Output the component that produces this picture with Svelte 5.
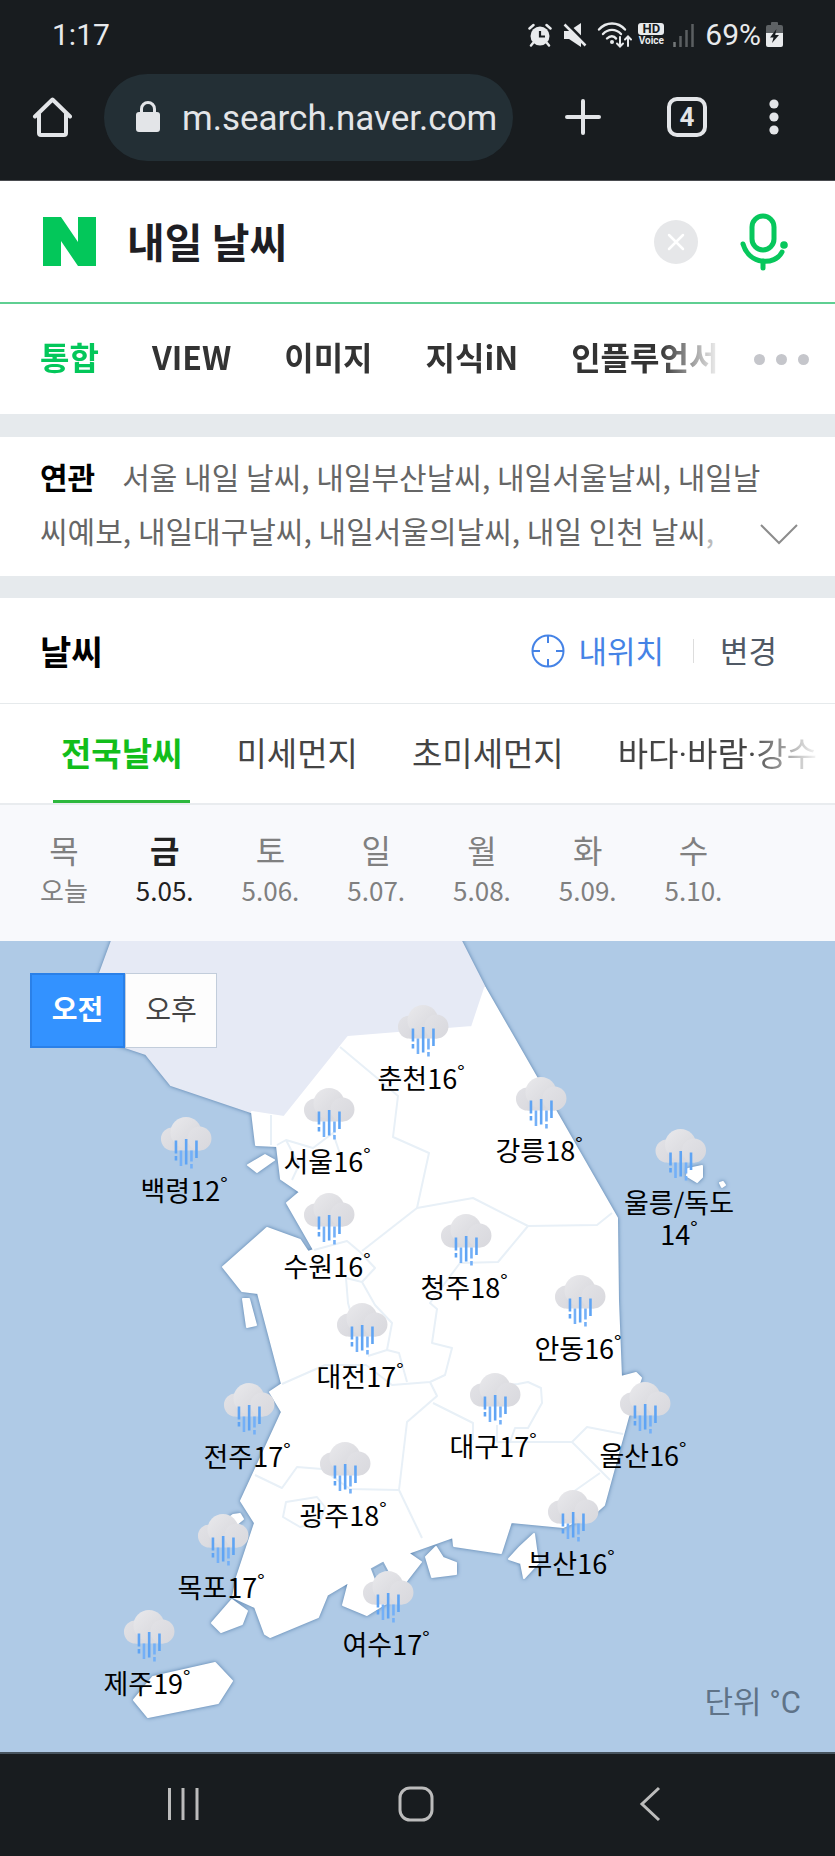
<script lang="ts">
  interface City {
    name: string;
    temp: number;
    x: number;
    y: number;
    wrap?: boolean;
  }

  // Map canvas size, city coordinates are relative to it
  const mapWidth = 835;
  const mapHeight = 811;

  const cities: City[] = [
    { name: "춘천", temp: 16, x: 423, y: 64 },
    { name: "강릉", temp: 18, x: 541, y: 136 },
    { name: "백령", temp: 12, x: 186, y: 176 },
    { name: "서울", temp: 16, x: 329, y: 147 },
    { name: "수원", temp: 16, x: 329, y: 252 },
    { name: "울릉/독도", temp: 14, x: 681, y: 188, wrap: true },
    { name: "청주", temp: 18, x: 466, y: 273 },
    { name: "안동", temp: 16, x: 580, y: 334 },
    { name: "대전", temp: 17, x: 362, y: 362 },
    { name: "전주", temp: 17, x: 249, y: 442 },
    { name: "대구", temp: 17, x: 495, y: 432 },
    { name: "울산", temp: 16, x: 645, y: 441 },
    { name: "광주", temp: 18, x: 345, y: 501 },
    { name: "부산", temp: 16, x: 573, y: 549 },
    { name: "목포", temp: 17, x: 223, y: 573 },
    { name: "여수", temp: 17, x: 388, y: 630 },
    { name: "제주", temp: 19, x: 149, y: 669 },
  ];

  const searchTabs = ["통합", "VIEW", "이미지", "지식iN", "인플루언서"];
  const weatherTabs = ["전국날씨", "미세먼지", "초미세먼지", "바다·바람·강수"];

  const days = [
    { day: "목", date: "오늘" },
    { day: "금", date: "5.05." },
    { day: "토", date: "5.06." },
    { day: "일", date: "5.07." },
    { day: "월", date: "5.08." },
    { day: "화", date: "5.09." },
    { day: "수", date: "5.10." },
  ];

  let query = $state("내일 날씨");
  let searchTab = $state(0);
  let weatherTab = $state(0);
  let selectedDay = $state(1);
  let period = $state("am");
</script>

<div class="screen">
  <div class="status-bar">
    <span class="time">1:17</span>
    <div class="status-icons">
      <svg width="24" height="24" viewBox="0 0 24 24">
        <circle cx="12" cy="13" r="9.5" fill="#e8eaec" />
        <path d="M1.500 5.500 5.500 2M22.500 5.500 18.500 2M5 20l-2 2.500M19 20l2 2.500" stroke="#e8eaec" stroke-width="2.500" stroke-linecap="round" />
        <path d="M12 8v5.500h5" stroke="#181c1f" stroke-width="2.200" fill="none" />
      </svg>
      <svg class="mute" width="24" height="24" viewBox="0 0 24 24">
        <path d="M1 8h5l12-8v24L6 16H1z" fill="#e8eaec" />
        <path d="M3.500 0 23.500 20" stroke="#181c1f" stroke-width="3" />
        <path d="M1.500 1.500 22.500 22.500" stroke="#e8eaec" stroke-width="2.500" />
      </svg>
      <svg class="wifi" width="36" height="28" viewBox="0 0 36 28">
        <g fill="none" stroke="#e8eaec" stroke-width="2.400" stroke-linecap="round">
          <path d="M2 8.500C9 .500 21 .500 28 8.500" />
          <path d="M6 13C11 7.500 19 7.500 24 13" />
          <path d="M10 17.500c3-3 7-3 9 0" />
          <path d="M23 16v9M20 22.500l3 3 3-3M31 25v-9M28 18.500l3-3 3 3" stroke-width="2" />
        </g>
        <circle cx="15" cy="21" r="2" fill="#e8eaec" />
      </svg>
      <span class="hd"><b>HD</b><i>Voice</i></span>
      <svg class="signal" width="22" height="24" viewBox="0 0 22 24">
        <path d="M1.500 24v-5" stroke="#74787a" stroke-width="2.500" />
        <path d="M7.500 24V13M13.500 24V7M19.500 24V1" stroke="#5b5f62" stroke-width="2.500" />
      </svg>
      <span class="battery-text">69%</span>
      <svg class="battery" width="17" height="25" viewBox="0 0 17 25">
        <path d="M5 1q0-1 1-1h5q1 0 1 1v2h3q2 0 2 2v7H0V5q0-2 2-2h3z" fill="#5d6164" />
        <path d="M0 11h17v12q0 2-2 2H2q-2 0-2-2z" fill="#e8eaec" />
        <path d="M10.500 7 4 15.500h3.500L6 21l7-8H9.200z" fill="#181c1f" />
      </svg>
    </div>
  </div>

  <div class="toolbar">
    <button class="icon-button" aria-label="Home">
      <svg width="40" height="40" viewBox="0 0 40 40" fill="none" stroke="#e3e5e8" stroke-width="4" stroke-linejoin="round" stroke-linecap="round">
        <path d="M3 19.500 20.500 2.500 38 19.500" />
        <path d="M7 17v19q0 2 2 2h23q2 0 2-2V17" />
      </svg>
    </button>
    <div class="address">
      <svg width="24" height="32" viewBox="0 0 24 32">
        <rect x="0" y="11" width="24" height="20" rx="3" fill="#e3e5e8" />
        <path d="M5.500 12V8a6.500 6.500 0 0 1 13 0v4" fill="none" stroke="#e3e5e8" stroke-width="3" />
      </svg>
      <span>m.search.naver.com</span>
    </div>
    <button class="icon-button new-tab" aria-label="New tab">
      <svg width="36" height="36" viewBox="0 0 36 36">
        <path d="M18 2v32M2 18h32" stroke="#e3e5e8" stroke-width="4" stroke-linecap="round" />
      </svg>
    </button>
    <button class="tab-count">4</button>
    <button class="icon-button menu" aria-label="Menu">
      <svg width="10" height="36" viewBox="0 0 10 36" fill="#e3e5e8">
        <circle cx="5" cy="5" r="4.600" />
        <circle cx="5" cy="18" r="4.600" />
        <circle cx="5" cy="31" r="4.600" />
      </svg>
    </button>
  </div>

  <form class="search" onsubmit={(e) => e.preventDefault()}>
    <a href="#naver" aria-label="NAVER" class="logo">
      <svg width="53" height="49" viewBox="0 0 53 49">
        <path d="M0 0h18l17 25V0h18v49H35L18 24v25H0z" fill="#03c75a" />
      </svg>
    </a>
    <input type="text" aria-label="검색어" bind:value={query} />
    <button type="button" class="clear" aria-label="지우기" onclick={() => (query = "")}>
      <svg width="44" height="44" viewBox="0 0 44 44">
        <circle cx="22" cy="22" r="22" fill="#e6e7e9" />
        <path d="M15 15l14 14M29 15 15 29" stroke="#fff" stroke-width="2.500" stroke-linecap="round" />
      </svg>
    </button>
    <button type="button" class="mic" aria-label="음성검색">
      <svg width="48" height="58" viewBox="0 0 48 58" fill="none" stroke="#07c75c" stroke-width="5" stroke-linecap="round">
        <rect x="12" y="3" width="22" height="34" rx="11" />
        <path d="M3 31C9 52 35 53 42 39" />
        <path d="M23 48v7" />
        <circle cx="44" cy="32" r="3.800" fill="#07c75c" stroke="none" />
      </svg>
    </button>
  </form>

  <nav class="search-nav">
    <div class="search-tabs">
      {#each searchTabs as tab, i}
        <a href="#tab-{i}" class:active={searchTab === i} onclick={() => (searchTab = i)}>{tab}</a>
      {/each}
    </div>
    <button class="more" aria-label="더보기"><span></span><span></span><span></span></button>
  </nav>

  <section class="related">
    <p>
      <strong>연관</strong><a href="#r1">서울 내일 날씨</a>, <a href="#r2">내일부산날씨</a>, <a href="#r3">내일서울날씨</a>, <a href="#r4">내일날<br />씨예보</a>, <a href="#r5">내일대구날씨</a>, <a href="#r6">내일서울의날씨</a>, <a href="#r7">내일 인천 날씨</a><span class="faded">,</span>
    </p>
    <button class="expand" aria-label="펼치기">
      <svg width="38" height="22" viewBox="0 0 38 22">
        <path d="M1 2l18 18L37 2" fill="none" stroke="#8c8c8c" stroke-width="2" />
      </svg>
    </button>
  </section>

  <section class="weather">
    <header class="weather-header">
      <h2>날씨</h2>
      <button class="location">
        <svg width="34" height="34" viewBox="0 0 34 34" fill="none" stroke="#4583e6" stroke-width="2">
          <circle cx="17" cy="17" r="15.500" />
          <path d="M17 2v7M17 25v7M2 17h7M25 17h7" />
        </svg>
        <span>내위치</span>
      </button>
      <button class="change"><span>변경</span></button>
    </header>

    <nav class="weather-tabs">
      {#each weatherTabs as tab, i}
        <a href="#weather-{i}" class:active={weatherTab === i} onclick={() => (weatherTab = i)}>{tab}</a>
      {/each}
    </nav>

    <div class="days">
      {#each days as item, i}
        <button class:active={selectedDay === i} onclick={() => (selectedDay = i)}>
          <span class="day">{item.day}</span>
          <span class="date">{item.date}</span>
        </button>
      {/each}
    </div>

    <div class="map">
      <svg class="land" viewBox="0 941 835 811" aria-hidden="true">
        <defs>
          <linearGradient id="cloud" x1="0" y1="0" x2="1" y2="1">
            <stop offset="0" stop-color="#e9e9ec" />
            <stop offset="1" stop-color="#d5d5da" />
          </linearGradient>
          <linearGradient id="cloud-side" x1="0" y1="0" x2="1" y2="1">
            <stop offset="0" stop-color="#e2e2e6" />
            <stop offset="1" stop-color="#d8d8dd" />
          </linearGradient>
        </defs>
        <g class="coast">
          <path class="north" d="M114 935 100 973 104 1040 125 1047 146 1054 171 1085 251 1112 284 1117 350 1037 472 1027 485 988 458 935z" />
          <g class="south">
            <path d="M485 988 617 1218 618 1300 621 1377 636 1373 641 1378 628 1417 604 1505 595 1513 563 1527 511 1522 501 1553 454 1546 453 1537 408 1553 421 1562 407 1580 388 1602 367 1615 343 1605 349 1582 327 1595 318 1617 270 1637 265 1634 255 1607 233 1597 237 1577 255 1523 241 1501 282 1412 270 1392 282 1384 258 1293 242 1291 223 1267 267 1228 300 1240 308 1252 314 1250 287 1203 300 1192 281 1179 277 1146 256 1145 252 1112 284 1117 348 1037 472 1027z" />
            <path d="M248 1165 265 1155 274 1160 257 1172z" />
            <path d="M243 1299 249 1299 256 1325 247 1327z" />
            <path d="M229 1518 233 1515 240 1514 243 1519 237 1524z" />
            <path d="M232 1600 247 1611 242 1624 221 1632 212 1623z" />
            <path d="M153 1677 215 1663 232 1681 218 1703 148 1717 134 1700z" />
            <path d="M436 1547 443 1558 456 1563 456 1574 432 1577 426 1557z" />
            <path d="M534 1534 538 1563 524 1578 521 1563 509 1559 520 1547z" />
            <path d="M688 1169 702 1166 702 1177 697 1182 687 1176z" />
            <path d="M720 1183 723 1182 725 1185 722 1187z" />
          </g>
        </g>
        <path class="inlet" d="M383 1563 372 1569 377 1582 392 1580z" />
        <g class="border">
          <path d="M340 1047 383 1083 398 1096 393 1137 429 1153 417 1208 473 1198 528 1226 597 1225 612 1213" />
          <path d="M528 1226 498 1262 460 1263 430 1303 437 1309 432 1343 452 1348 445 1375 430 1382 392 1385 366 1365 325 1365 282 1384" />
          <path d="M417 1208 362 1251 M314 1250 347 1241 360 1252 375 1268 362 1282 346 1278 348 1303 358 1340 M362 1282 375 1305 392 1323 387 1350 368 1356 M387 1350 399 1353 407 1382" />
          <path d="M430 1382 437 1396 407 1422 399 1490 422 1538 M433 1403 473 1423 473 1440 M399 1490 350 1489 322 1469 297 1467 282 1488 255 1475" />
          <path d="M286 1502 317 1497 325 1507 320 1522 300 1527 283 1517z" />
          <path d="M500 1385 518 1384 528 1382 541 1388 542 1403 528 1428 515 1428 510 1442 M497 1425v17h75l15-15 36 7 M572 1442 610 1480 M600 1473 573 1492" />
          <path d="M271 1115v30 M277 1145 286 1140 313 1148 333 1133 342 1160 M286 1140 299 1165 292 1180" />
        </g>
      </svg>

      <div class="period">
        <button class:active={period === "am"} onclick={() => (period = "am")}>오전</button>
        <button class:active={period === "pm"} onclick={() => (period = "pm")}>오후</button>
      </div>

      {#each cities as city (city.name)}
        <a
          href="#{city.name}"
          class="city"
          style="left: {(city.x / mapWidth) * 100}%; top: {(city.y / mapHeight) * 100}%"
        >
          <svg width="52" height="52" viewBox="0 0 52 52">
            <circle cx="12" cy="22" r="11.500" fill="url(#cloud-side)" />
            <path d="M12 18h28v15.500H12z" fill="#dadadf" />
            <circle cx="25.500" cy="15.500" r="15.500" fill="url(#cloud)" />
            <circle cx="39" cy="21.500" r="12" fill="url(#cloud-side)" />
            <g stroke="#5fa4f4" stroke-width="2.600">
              <path d="M15.500 23.500v13M15.500 39v4.500M25.700 22v25.500M36 23.500v17.500" />
              <path d="M20.500 33.500v15.500M31 33.500v11M31 47v4.500" stroke="#74b0f7" />
            </g>
          </svg>
          <span class="label">
            {city.name}{#if city.wrap}<br />{/if}{city.temp}<sup>°</sup>
          </span>
        </a>
      {/each}

      <span class="unit">단위 °C</span>
    </div>
  </section>

  <div class="nav-bar">
    <button aria-label="Recents">
      <svg width="34" height="36" viewBox="0 0 34 36">
        <path d="M3.500 2v32M17 2v32M31 2v32" stroke="#bcbcbc" stroke-width="3" />
      </svg>
    </button>
    <button aria-label="Home screen">
      <svg width="36" height="36" viewBox="0 0 36 36">
        <rect x="2" y="2" width="32" height="32" rx="10" fill="none" stroke="#bcbcbc" stroke-width="3" />
      </svg>
    </button>
    <button aria-label="Back">
      <svg width="22" height="36" viewBox="0 0 22 36">
        <path d="M20 2 3 18l17 16" fill="none" stroke="#bcbcbc" stroke-width="3" />
      </svg>
    </button>
  </div>
</div>

<style>
  :global(body) {
    margin: 0;
    background: #e6eaed;
  }

  .screen {
    font-family: "Noto Sans CJK KR", "Noto Sans", sans-serif;
    color: #333;
    overflow: hidden;
  }

  .screen * {
    box-sizing: border-box;
  }

  button {
    padding: 0;
    border: none;
    background: none;
    font: inherit;
    color: inherit;
    cursor: pointer;
  }

  a {
    color: inherit;
    text-decoration: none;
  }

  svg {
    display: block;
    flex: none;
  }

  .status-bar {
    display: flex;
    justify-content: space-between;
    align-items: center;
    height: 72px;
    padding: 0 52px 3px;
    background: #181c1f;
    color: #e8eaec;
    font-family: Roboto, sans-serif;
    font-size: 30px;
  }

  .status-icons {
    display: flex;
    align-items: center;
  }

  .mute {
    margin-left: 11px;
  }

  .wifi {
    margin-left: 10px;
  }

  .hd {
    display: flex;
    flex-direction: column;
    align-items: center;
    width: 26px;
    margin-left: 5px;
    line-height: 12px;
  }

  .hd b {
    width: 26px;
    border-radius: 3px;
    background: #e8eaec;
    color: #181c1f;
    font-size: 13px;
    text-align: center;
  }

  .hd i {
    font-size: 10px;
    font-style: normal;
    font-weight: 700;
  }

  .signal {
    margin-left: 9px;
  }

  .battery-text {
    margin-left: 10px;
  }

  .battery {
    margin-left: 5px;
  }

  .toolbar {
    display: flex;
    align-items: center;
    height: 109px;
    padding: 2px 56px 20px 32px;
    border-bottom: 1px solid #4a4c50;
    background: #181c1f;
    color: #e3e5e8;
    font-family: Roboto, sans-serif;
  }

  .address {
    display: flex;
    flex: 1;
    align-items: center;
    gap: 22px;
    height: 87px;
    margin-left: 32px;
    padding-left: 32px;
    border-radius: 44px;
    background: #232f35;
    font-size: 35px;
    white-space: nowrap;
  }

  .address span {
    padding-top: 3px;
  }

  .new-tab {
    margin-left: 52px;
  }

  .tab-count {
    width: 40px;
    height: 40px;
    margin-left: 66px;
    border: 4px solid #e3e5e8;
    border-radius: 10px;
    font-size: 26px;
    font-weight: 700;
    line-height: 32px;
  }

  .menu {
    margin-left: 62px;
  }

  .search {
    display: flex;
    align-items: center;
    height: 123px;
    padding: 0 47px 0 43px;
    border-bottom: 2px solid #5fcf92;
    background: #fff;
  }

  .search input {
    flex: 1;
    min-width: 0;
    padding: 0 0 4px;
    margin-left: 31px;
    border: none;
    outline: none;
    background: none;
    color: #1e1e23;
    font-family: inherit;
    font-size: 41px;
    font-weight: 700;
    line-height: 56px;
  }

  .mic {
    margin-left: 42px;
  }

  .search-nav {
    display: flex;
    align-items: center;
    justify-content: space-between;
    height: 110px;
    padding: 0 26px 0 40px;
    background: #fff;
  }

  .search-tabs {
    display: flex;
    flex: 1;
    gap: 53px;
    margin-right: 32px;
    padding-bottom: 6px;
    overflow: hidden;
    white-space: nowrap;
    font-size: 32px;
    font-weight: 700;
    line-height: 48px;
    mask-image: linear-gradient(to right, #000 620px, transparent 100%);
  }

  .search-tabs .active {
    color: #03c75a;
  }

  .more {
    display: flex;
    gap: 11px;
  }

  .more span {
    width: 11px;
    height: 11px;
    border-radius: 50%;
    background: #c5c6cb;
  }

  .related {
    display: flex;
    align-items: flex-end;
    justify-content: space-between;
    margin: 23px 0 22px;
    padding: 12px 40px 19px;
    background: #fff;
    color: #666;
    font-size: 30px;
    line-height: 54px;
    white-space: nowrap;
  }

  .related p {
    margin: 0;
  }

  .related strong {
    margin-right: 27px;
    color: #000;
  }

  .faded {
    color: #bbb;
  }

  .expand {
    padding-bottom: 12px;
  }

  .weather {
    background: #fff;
  }

  .weather-header {
    display: flex;
    align-items: center;
    height: 106px;
    padding: 0 58px 0 40px;
    border-bottom: 1px solid #e6eaec;
    font-size: 31px;
  }

  .weather-header h2 {
    flex: 1;
    margin: 0;
    color: #000;
    font-size: 34px;
    font-weight: 700;
  }

  .weather-header span {
    display: block;
    padding-bottom: 3px;
  }

  .location {
    display: flex;
    align-items: center;
    gap: 13px;
    color: #4583e6;
  }

  .change {
    margin-left: 29px;
    padding-left: 26px;
    border-left: 1px solid #ddd;
    color: #505965;
    line-height: 21px;
  }

  .weather-tabs {
    display: flex;
    gap: 38px;
    height: 101px;
    padding: 0 20px 0 53px;
    overflow: hidden;
    border-bottom: 2px solid #e9ecef;
    color: #444;
    font-family: Roboto, "Noto Sans CJK KR", sans-serif;
    font-size: 33px;
    line-height: 102px;
    white-space: nowrap;
  }

  .weather-tabs a {
    padding: 0 8px;
  }

  .weather-tabs a:last-child {
    mask-image: linear-gradient(to right, #000 140px, transparent 210px);
  }

  .weather-tabs .active {
    border-bottom: 3px solid #2db83d;
    color: #12be1b;
    font-weight: 700;
  }

  .days {
    display: flex;
    gap: 48px;
    height: 136px;
    padding: 23px 40px;
    background: #f8f9fc;
    color: #808080;
  }

  .days button {
    display: flex;
    flex-direction: column;
    align-items: center;
  }

  .day {
    font-size: 32px;
    line-height: 42px;
  }

  .date {
    font-size: 26px;
    line-height: 40px;
  }

  .days .active {
    color: #222;
  }

  .active .day {
    font-weight: 700;
  }

  .map {
    position: relative;
    background: #afcae6;
  }

  .land {
    width: 100%;
    height: auto;
  }

  .coast {
    filter: drop-shadow(0 0 2px #4f7aa8);
  }

  .north,
  .south path {
    stroke-width: 2;
    stroke-linejoin: round;
  }

  .north {
    fill: #e6eaf5;
    stroke: #e6eaf5;
  }

  .south path {
    fill: #fff;
    stroke: #fff;
  }

  .inlet {
    fill: #a6c2df;
    stroke: #8fafd0;
    stroke-width: 2;
  }

  .border path {
    fill: none;
    stroke: #e8f0f7;
    stroke-width: 2;
    stroke-linejoin: round;
  }

  .period {
    position: absolute;
    top: 32px;
    left: 30px;
    display: flex;
    font-size: 28px;
  }

  .period button {
    width: 92px;
    height: 75px;
    padding-bottom: 5px;
    border: 1px solid #c2cddb;
    background: #fdfdfd;
    color: #444;
  }

  .period .active {
    width: 95px;
    border: 2px solid #2a80e8;
    background: #3392ff;
    color: #fff;
    font-weight: 700;
  }

  .city {
    position: absolute;
    display: flex;
    flex-direction: column;
    align-items: center;
    color: #000;
    text-align: center;
    transform: translateX(-50%);
  }

  .label {
    margin-top: 5px;
    margin-right: 4px;
    font-size: 27px;
    line-height: 32px;
    white-space: nowrap;
  }

  .label sup {
    font-size: 20px;
    line-height: 0;
    vertical-align: 9px;
  }

  .unit {
    position: absolute;
    right: 34px;
    bottom: 26px;
    color: #5f7388;
    font-family: Roboto, "Noto Sans CJK KR", sans-serif;
    font-size: 31px;
    line-height: 46px;
  }

  .nav-bar {
    display: grid;
    grid-template-columns: repeat(3, 1fr);
    align-items: center;
    justify-items: center;
    height: 104px;
    padding: 0 68px 3px 66px;
    border-top: 2px solid #47545f;
    background: #181c1f;
  }
</style>
